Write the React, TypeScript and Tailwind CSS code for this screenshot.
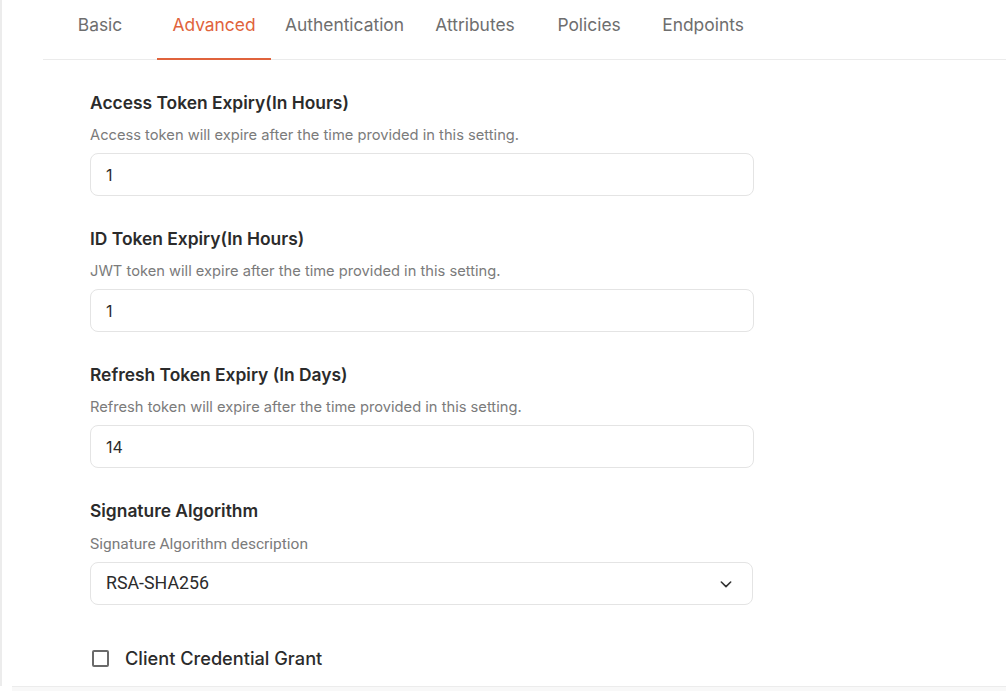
import React from "react";

const tabs = ["Basic", "Advanced", "Authentication", "Attributes", "Policies", "Endpoints"];

function Field({ title, desc, value }: { title: string; desc: string; value: string }) {
  return (
    <div className="flex flex-col">
      <div className="text-[17.4px] font-semibold leading-[24px] text-[#2b2b2b]">{title}</div>
      <div className="mt-[10px] text-[14.7px] leading-[20px] text-[#7b7b7b]">{desc}</div>
      <div className="mt-[8px] flex h-[43px] w-[664px] items-center rounded-[8px] border border-[#e4e4e4] bg-white px-[15px] text-[16px] text-[#2b2b2b]">
        {value}
      </div>
    </div>
  );
}

export default function App() {
  return (
    <div
      className="h-[691px] w-[1006px] overflow-hidden bg-white"
      style={{ fontFamily: "Inter, 'Liberation Sans', sans-serif" }}
    >
      <div className="flex h-[686px] flex-col border-l-2 border-[#ececec]">
        <div className="ml-[41px] flex h-[60px] border-b border-[#ebebeb]">
          {tabs.map((t) => (
            <div
              key={t}
              className={
                t === "Advanced"
                  ? "relative flex min-w-[114px] items-center justify-center px-[14px] pb-[8px] text-[17.4px] text-[#e0633c]"
                  : "relative flex min-w-[114px] items-center justify-center px-[14px] pb-[8px] text-[17.4px] text-[#6e6e6e]"
              }
            >
              {t}
              {t === "Advanced" && (
                <div className="absolute bottom-[-1px] left-0 right-0 h-[2px] bg-[#e0633c]" />
              )}
            </div>
          ))}
        </div>
        <div className="ml-[88px] mt-[31px] flex flex-col gap-[31px]">
          <Field
            title="Access Token Expiry(In Hours)"
            desc="Access token will expire after the time provided in this setting."
            value="1"
          />
          <Field
            title="ID Token Expiry(In Hours)"
            desc="JWT token will expire after the time provided in this setting."
            value="1"
          />
          <Field
            title="Refresh Token Expiry (In Days)"
            desc="Refresh token will expire after the time provided in this setting."
            value="14"
          />
          <div className="flex flex-col">
            <div className="text-[17.4px] font-semibold leading-[24px] text-[#2b2b2b]">Signature Algorithm</div>
            <div
              className="mt-[11px] text-[15.5px] leading-[20px] text-[#7b7b7b]"
              style={{ fontFamily: "Roboto, 'Liberation Sans', sans-serif" }}
            >
              Signature Algorithm description
            </div>
            <div
              className="mt-[8px] flex h-[43px] w-[663px] items-center justify-between rounded-[8px] border border-[#e4e4e4] bg-white pl-[15px] pr-[18px] text-[17.8px] text-[#2b2b2b]"
              style={{ fontFamily: "Roboto, 'Liberation Sans', sans-serif" }}
            >
              <span>RSA-SHA256</span>
              <svg width="16" height="16" viewBox="0 0 24 24" fill="none" stroke="#333" strokeWidth="2.4" strokeLinecap="round" strokeLinejoin="round">
                <path d="M5 9l7 7 7-7" />
              </svg>
            </div>
          </div>
          <div className="mt-[9px] flex items-center gap-[16px] pl-[2px]">
            <div className="h-[17px] w-[17px] rounded-[2px] border-2 border-[#6a6a6a]" />
            <span className="text-[18.2px] font-medium text-[#2b2b2b]">Client Credential Grant</span>
          </div>
        </div>
      </div>
      <div className="ml-[12px] h-[5px] border-t border-[#ececec] bg-[#f8f8f8]" />
    </div>
  );
}
